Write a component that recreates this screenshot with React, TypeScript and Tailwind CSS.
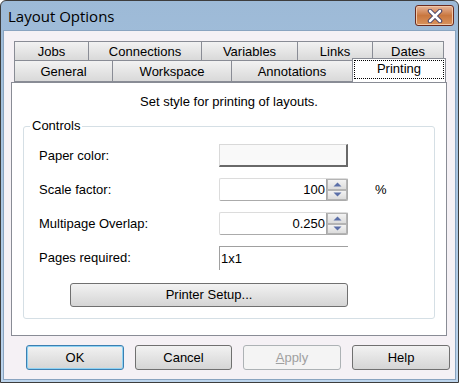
import React from 'react';

const font = { fontFamily: '"Liberation Sans", Arial, sans-serif' };

function Tab({ label, w, selected }: { label: string; w: number; selected?: boolean }) {
  if (selected) {
    return (
      <div
        className="relative z-10 -mt-[2px] h-[24px] border border-b-0 border-[#898c95] bg-white p-px"
        style={{ width: w }}
      >
        <div className="flex h-[19px] items-start justify-center border border-dotted border-black leading-[16px]">
          {label}
        </div>
      </div>
    );
  }
  return (
    <div
      className="flex h-full items-center justify-center border border-[#898c95] bg-gradient-to-b from-[#f2f2f2] to-[#d9d9d9] pt-px -ml-px first:ml-0"
      style={{ width: w }}
    >
      {label}
    </div>
  );
}

function Spinner() {
  return (
    <div className="flex w-[21px] flex-col border-l border-[#a9a9a9]">
      {[0, 1].map((i) => (
        <div
          key={i}
          className="flex flex-1 items-center justify-center border border-[#b4b4b4] bg-gradient-to-b from-[#f3f3f3] to-[#dcdcdc]"
        >
          <svg width="9" height="5" viewBox="0 0 9 5">
            {i === 0 ? (
              <path d="M0.5 4.5 L4.5 0.5 L8.5 4.5 Z" fill="#5b6fa8" />
            ) : (
              <path d="M0.5 0.5 L4.5 4.5 L8.5 0.5 Z" fill="#5b6fa8" />
            )}
          </svg>
        </div>
      ))}
    </div>
  );
}

function Btn({ label, focus, disabled, w }: { label: React.ReactNode; focus?: boolean; disabled?: boolean; w: number }) {
  return (
    <div
      className={`flex h-[25px] items-center justify-center rounded-[3px] border ${
        focus
          ? 'border-[#3c7fb1] shadow-[inset_0_0_0_1px_#8fd2f3] bg-gradient-to-b from-[#f2f2f2] to-[#d5d5d5]'
          : disabled
          ? 'border-[#adb2b5] bg-[#f4f4f4] text-[#a0a0a0]'
          : 'border-[#707070] bg-gradient-to-b from-[#f2f2f2] to-[#d5d5d5]'
      }`}
      style={{ width: w }}
    >
      {label}
    </div>
  );
}

export default function App() {
  return (
    <div className="h-[383px] w-[459px] bg-white" style={font}>
      <div className="flex h-full w-full flex-col overflow-hidden rounded-t-[6px] border border-[#3d3d3d] bg-gradient-to-b from-[#9dbad7] via-[#a9c5e1] to-[#bcd4ec]">
        {/* Title bar */}
        <div className="flex h-[29px] shrink-0 items-start justify-between pl-[7px] pr-[4px]">
          <span className="pt-[4px] text-[15px] text-black" style={{ fontFamily: '"Open Sans", "Noto Sans", sans-serif' }}>
            Layout Options
          </span>
          <div className="mt-[4px] flex h-[21px] w-[39px] items-center justify-center rounded-[3px] border border-[#6b2b1f] bg-gradient-to-b from-[#e6b498] via-[#c9773f] to-[#d9925c] shadow-[inset_0_0_0_1px_#f0c8a8]">
            <svg width="16" height="14" viewBox="0 0 16 14">
              <path d="M3 2 L13 12 M13 2 L3 12" stroke="#3b3b66" strokeWidth="4.5" strokeLinecap="round" />
              <path d="M3 2 L13 12 M13 2 L3 12" stroke="#ffffff" strokeWidth="2.6" strokeLinecap="round" />
            </svg>
          </div>
        </div>

        {/* Body */}
        <div className="mx-[2px] mb-[2px] flex flex-1 flex-col border border-[#8aa4c0] bg-[#f5f1f5] text-[13px] text-black">
          <div className="pl-[7px] pr-[8px] pt-[10px]">
            {/* Tabs */}
            <div className="flex h-[20px] pl-[3px]">
              <Tab label="Jobs" w={75} />
              <Tab label="Connections" w={114} />
              <Tab label="Variables" w={97} />
              <Tab label="Links" w={76} />
              <Tab label="Dates" w={72} />
            </div>
            <div className="-mt-px flex h-[22px] items-start pl-[3px]">
              <div className="flex h-[22px]">
                <Tab label="General" w={99} />
                <Tab label="Workspace" w={120} />
                <Tab label="Annotations" w={122} />
              </div>
              <div className="-ml-px">
                <Tab label="Printing" w={94} selected />
              </div>
            </div>

            {/* Panel */}
            <div className="h-[254px] w-[436px] border border-[#898c95] bg-white">
              <div className="pt-[11px] text-center leading-[16px]">Set style for printing of layouts.</div>
              <div className="relative mx-[11px] mt-[16px] h-[193px] rounded-[3px] border border-[#d5dfe5]">
                <span className="absolute -top-[9px] left-[6px] bg-white px-[2px] leading-[16px]">Controls</span>
                <div className="flex flex-col gap-[11px] pl-[15px] pt-[17px]">
                  <div className="flex h-[23px] items-center">
                    <span className="w-[180px]">Paper color:</span>
                    <div className="h-[23px] w-[129px] border border-[#d9d9d9] border-b-[#696969] border-r-[#696969] border-b-2 border-r-2 bg-[#f9f9f9]" />
                  </div>
                  <div className="flex h-[23px] items-center">
                    <span className="w-[180px]">Scale factor:</span>
                    <div className="flex h-[23px] w-[129px] rounded-[2px] border border-[#dcdcdc] border-r-[#ababab] border-b-[#ababab]">
                      <span className="flex-1 pr-[1px] text-right leading-[21px]">100</span>
                      <Spinner />
                    </div>
                    <span className="ml-[27px]">%</span>
                  </div>
                  <div className="flex h-[23px] items-center">
                    <span className="w-[180px]">Multipage Overlap:</span>
                    <div className="flex h-[23px] w-[129px] rounded-[2px] border border-[#dcdcdc] border-r-[#ababab] border-b-[#ababab]">
                      <span className="flex-1 pr-[1px] text-right leading-[21px]">0.250</span>
                      <Spinner />
                    </div>
                  </div>
                  <div className="flex h-[24px] items-center">
                    <span className="w-[180px]">Pages required:</span>
                    <div className="h-[24px] w-[129px] border-l border-t border-[#a0a0a0] pl-px leading-[24px]">1x1</div>
                  </div>
                </div>
                <div className="ml-[46px] mt-[13px] flex h-[24px] w-[278px] items-center justify-center rounded-[3px] border border-[#707070] bg-gradient-to-b from-[#f2f2f2] to-[#d5d5d5]">
                  Printer Setup...
                </div>
              </div>
            </div>
          </div>

          {/* Bottom buttons */}
          <div className="flex gap-[11px] pl-[22px] pt-[9px]">
            <Btn label="OK" focus w={98} />
            <Btn label="Cancel" w={97} />
            <Btn label={<span><u>A</u>pply</span>} disabled w={98} />
            <Btn label="Help" w={98} />
          </div>
        </div>
      </div>
    </div>
  );
}
